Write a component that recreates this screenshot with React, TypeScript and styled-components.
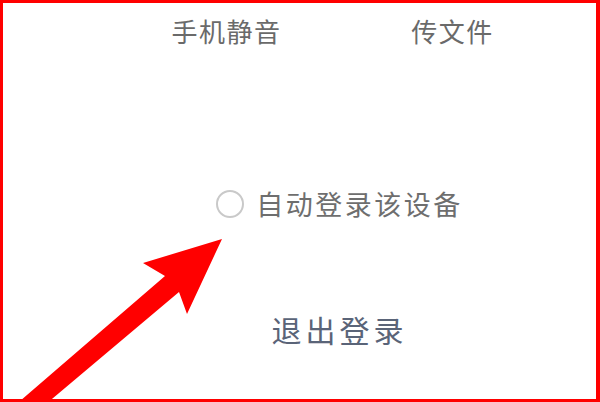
import React from "react";
import styled, { createGlobalStyle } from "styled-components";

const GlobalStyle = createGlobalStyle`
  html, body {
    margin: 0;
    padding: 0;
    background: #ffffff;
    overflow: hidden;
  }
  * {
    box-sizing: border-box;
  }
`;

const Frame = styled.div`
  position: relative;
  width: 600px;
  height: 402px;
  border: 3px solid #ff0000;
  border-right-width: 4px;
  background: #ffffff;
  overflow: hidden;
  font-family: "Noto Sans CJK SC", "Noto Sans", sans-serif;
`;

const Content = styled.div`
  display: flex;
  flex-direction: column;
  align-items: center;
  padding: 15px 0 0 80px;
`;

const ActionRow = styled.div`
  display: grid;
  grid-template-columns: 226px 226px;
`;

const ActionLabel = styled.span`
  text-align: center;
  font-size: 26px;
  line-height: 26px;
  letter-spacing: 1.5px;
  color: #6a6a6a;
`;

const CheckRow = styled.label`
  display: flex;
  align-items: center;
  gap: 12px;
  margin-top: 146px;
  height: 28px;
`;

const Radio = styled.span`
  width: 28px;
  height: 28px;
  border-radius: 50%;
  border: 2px solid #c9c9c9;
  background: #ffffff;
`;

const CheckText = styled.span`
  font-size: 27px;
  line-height: 28px;
  letter-spacing: 2.5px;
  color: #6e6e6e;
`;

const LogoutButton = styled.button`
  margin-top: 96px;
  border: 0;
  padding: 0;
  background: transparent;
  font-family: inherit;
  font-size: 30px;
  line-height: 31px;
  letter-spacing: 4px;
  color: #5a6478;
  cursor: pointer;
`;

const ArrowLayer = styled.svg`
  position: absolute;
  top: -3px;
  left: -3px;
  width: 600px;
  height: 402px;
  pointer-events: none;
`;

const App: React.FC = () => {
  return (
    <>
      <GlobalStyle />
      <Frame>
        <Content>
          <ActionRow>
            <ActionLabel>手机静音</ActionLabel>
            <ActionLabel>传文件</ActionLabel>
          </ActionRow>
          <CheckRow>
            <Radio />
            <CheckText>自动登录该设备</CheckText>
          </CheckRow>
          <LogoutButton type="button">退出登录</LogoutButton>
        </Content>
        <ArrowLayer viewBox="0 0 600 402">
          <polygon
            points="222,239 143,263 165,276 -2,420 27,420 179,292 187,314"
            fill="#ff0000"
          />
        </ArrowLayer>
      </Frame>
    </>
  );
};

export default App;
